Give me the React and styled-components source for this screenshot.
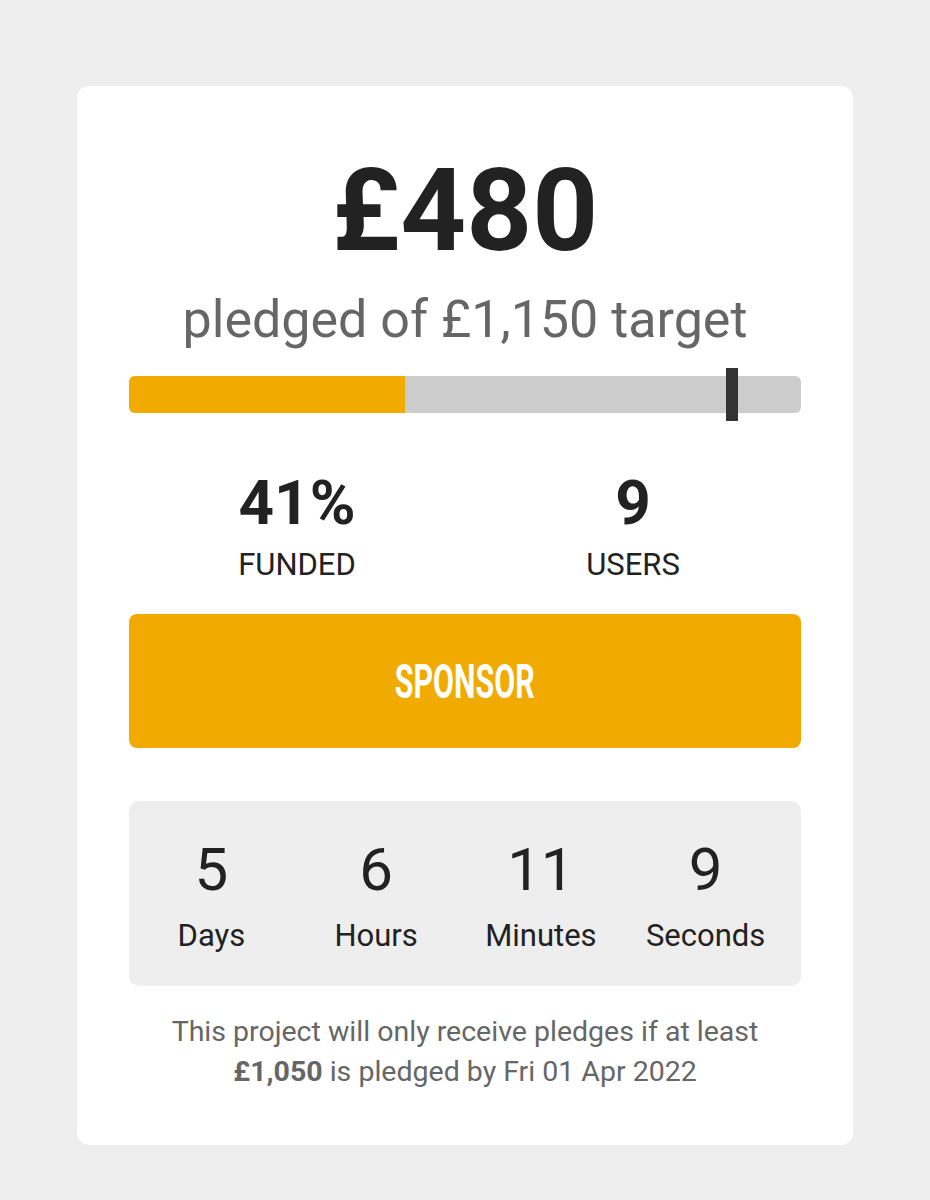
import React from "react"
import styled, { createGlobalStyle } from "styled-components"

const GlobalStyle = createGlobalStyle`
  html, body {
    margin: 0;
    padding: 0;
    background: #eeeeee;
    font-family: Roboto, "Liberation Sans", sans-serif;
  }
`

const Page = styled.div`
  display: flex;
  justify-content: center;
  padding: 86px 0 55px;
  min-height: 1200px;
  box-sizing: border-box;
`

const Card = styled.section`
  width: 776px;
  box-sizing: border-box;
  background: #ffffff;
  border-radius: 12px;
  padding: 67px 52px 53px;
  display: flex;
  flex-direction: column;
  align-items: stretch;
  text-align: center;
`

const Amount = styled.h1`
  margin: 0;
  font-size: 115px;
  line-height: 1;
  font-weight: 700;
  color: #222222;
`

const Subtitle = styled.p`
  margin: 26px 0 0;
  font-size: 52px;
  line-height: 1;
  color: #666666;
`

const Track = styled.div`
  position: relative;
  margin-top: 30px;
  height: 37px;
  background: #cccccc;
  border-radius: 6px;
`

const Fill = styled.div`
  height: 100%;
  background: #f0aa00;
  border-radius: 6px 0 0 6px;
`

const Marker = styled.div`
  position: absolute;
  top: -8px;
  bottom: -8px;
  width: 12px;
  background: #333333;
`

const Stats = styled.div`
  display: grid;
  grid-template-columns: 1fr 1fr;
  margin-top: 59px;
`

const Stat = styled.div`
  display: flex;
  flex-direction: column;
  align-items: center;
`

const StatValue = styled.span`
  font-size: 62px;
  line-height: 1;
  font-weight: 700;
  color: #222222;
`

const StatLabel = styled.span`
  margin-top: 15px;
  font-size: 31px;
  line-height: 1;
  color: #222222;
  text-transform: uppercase;
`

const SponsorButton = styled.button`
  margin-top: 34px;
  height: 134px;
  border: none;
  border-radius: 8px;
  background: #f0aa00;
  color: #ffffff;
  font-family: Roboto, "Liberation Sans", sans-serif;
  cursor: pointer;
`

const SponsorText = styled.span`
  display: inline-block;
  font-weight: 700;
  font-size: 49px;
  line-height: 1;
  text-transform: uppercase;
  transform: scaleX(0.62);
`

const Countdown = styled.div`
  margin-top: 53px;
  display: grid;
  grid-template-columns: repeat(4, 1fr);
  padding: 39px 13px 35px 0;
  background: #eeeeee;
  border-radius: 10px;
`

const Unit = styled.div`
  display: flex;
  flex-direction: column;
  align-items: center;
  color: #222222;
`

const UnitValue = styled.span`
  font-size: 60px;
  line-height: 1;
`

const UnitLabel = styled.span`
  margin-top: 20px;
  font-size: 31px;
  line-height: 1;
`

const Note = styled.p`
  margin: 26px 0 0;
  font-size: 28.5px;
  line-height: 40px;
  color: #666666;

  strong {
    font-weight: 700;
  }
`

const pledged = 480
const target = 1150
const minimum = 1050

const countdown = [
  { value: 5, label: "Days" },
  { value: 6, label: "Hours" },
  { value: 11, label: "Minutes" },
  { value: 9, label: "Seconds" },
]

const App = () => {
  const funded = Math.floor((pledged / target) * 100)
  const markerAt = (minimum / target) * 100

  return (
    <>
      <GlobalStyle />
      <Page>
        <Card>
          <Amount>£{pledged}</Amount>
          <Subtitle>pledged of £1,150 target</Subtitle>
          <Track>
            <Fill style={{ width: `${funded}%` }} />
            <Marker style={{ left: `calc(${markerAt}% - 17px)` }} />
          </Track>
          <Stats>
            <Stat>
              <StatValue>{funded}%</StatValue>
              <StatLabel>Funded</StatLabel>
            </Stat>
            <Stat>
              <StatValue>9</StatValue>
              <StatLabel>Users</StatLabel>
            </Stat>
          </Stats>
          <SponsorButton>
            <SponsorText>Sponsor</SponsorText>
          </SponsorButton>
          <Countdown>
            {countdown.map((c) => (
              <Unit key={c.label}>
                <UnitValue>{c.value}</UnitValue>
                <UnitLabel>{c.label}</UnitLabel>
              </Unit>
            ))}
          </Countdown>
          <Note>
            This project will only receive pledges if at least
            <br />
            <strong>£1,050</strong> is pledged by Fri 01 Apr 2022
          </Note>
        </Card>
      </Page>
    </>
  )
}

export default App
